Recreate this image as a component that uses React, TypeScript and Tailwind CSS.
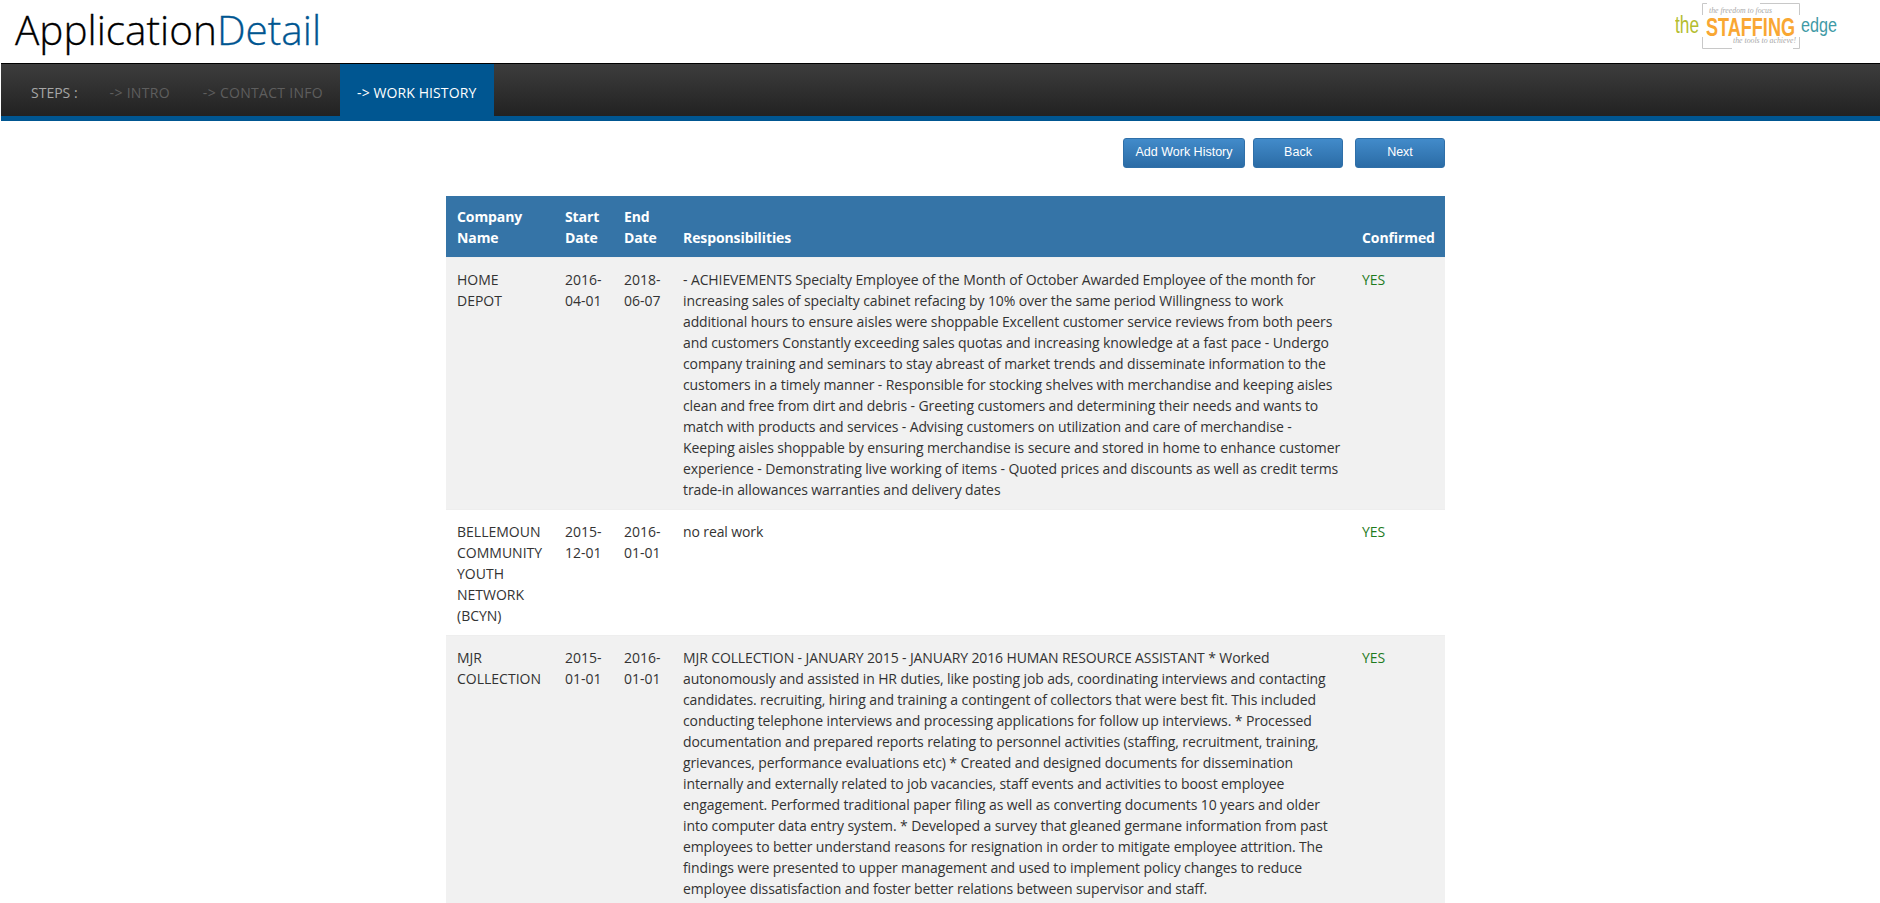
const bodyFont = "font-['Open_Sans','Noto_Sans',sans-serif]";

type WorkRow = {
  company: string[];
  start: string[];
  end: string[];
  lines: string[];
};

const rows: WorkRow[] = [
  {
    company: ["HOME", "DEPOT"],
    start: ["2016-", "04-01"],
    end: ["2018-", "06-07"],
    lines: [
      "- ACHIEVEMENTS Specialty Employee of the Month of October Awarded Employee of the month for",
      "increasing sales of specialty cabinet refacing by 10% over the same period Willingness to work",
      "additional hours to ensure aisles were shoppable Excellent customer service reviews from both peers",
      "and customers Constantly exceeding sales quotas and increasing knowledge at a fast pace - Undergo",
      "company training and seminars to stay abreast of market trends and disseminate information to the",
      "customers in a timely manner - Responsible for stocking shelves with merchandise and keeping aisles",
      "clean and free from dirt and debris - Greeting customers and determining their needs and wants to",
      "match with products and services - Advising customers on utilization and care of merchandise -",
      "Keeping aisles shoppable by ensuring merchandise is secure and stored in home to enhance customer",
      "experience - Demonstrating live working of items - Quoted prices and discounts as well as credit terms",
      "trade-in allowances warranties and delivery dates",
    ],
  },
  {
    company: ["BELLEMOUN", "COMMUNITY", "YOUTH", "NETWORK", "(BCYN)"],
    start: ["2015-", "12-01"],
    end: ["2016-", "01-01"],
    lines: ["no real work"],
  },
  {
    company: ["MJR", "COLLECTION"],
    start: ["2015-", "01-01"],
    end: ["2016-", "01-01"],
    lines: [
      "MJR COLLECTION - JANUARY 2015 - JANUARY 2016 HUMAN RESOURCE ASSISTANT * Worked",
      "autonomously and assisted in HR duties, like posting job ads, coordinating interviews and contacting",
      "candidates. recruiting, hiring and training a contingent of collectors that were best fit. This included",
      "conducting telephone interviews and processing applications for follow up interviews. * Processed",
      "documentation and prepared reports relating to personnel activities (staffing, recruitment, training,",
      "grievances, performance evaluations etc) * Created and designed documents for dissemination",
      "internally and externally related to job vacancies, staff events and activities to boost employee",
      "engagement. Performed traditional paper filing as well as converting documents 10 years and older",
      "into computer data entry system. * Developed a survey that gleaned germane information from past",
      "employees to better understand reasons for resignation in order to mitigate employee attrition. The",
      "findings were presented to upper management and used to implement policy changes to reduce",
      "employee dissatisfaction and foster better relations between supervisor and staff.",
    ],
  },
];

function Lines({ items }: { items: string[] }) {
  return (
    <>
      {items.map((line) => (
        <span key={line} className="block whitespace-nowrap">
          {line}
        </span>
      ))}
    </>
  );
}

function Logo() {
  return (
    <svg viewBox="0 0 164 48" className="h-[48px] w-[164px]">
      {/* frame corners */}
      <path
        d="M27.5 13V1.5H32M85 1.5H124.5V13M27.5 35V46.5H57M118 46.5H124.5V35"
        fill="none"
        stroke="#c8c8c8"
        strokeWidth="1"
      />
      <text x="34" y="11" fontFamily="Liberation Serif, serif" fontStyle="italic" fontSize="7.5" fill="#a9a9a9" textLength="63" lengthAdjust="spacingAndGlyphs">
        the freedom to focus
      </text>
      <text x="58" y="41" fontFamily="Liberation Serif, serif" fontStyle="italic" fontSize="7.5" fill="#a9a9a9" textLength="63" lengthAdjust="spacingAndGlyphs">
        the tools to achieve!
      </text>
      <text x="0" y="31" fontFamily="Liberation Sans, sans-serif" fontSize="23" fill="#b4bd2f" textLength="24" lengthAdjust="spacingAndGlyphs">
        the
      </text>
      <text x="31" y="34" fontFamily="Liberation Sans, sans-serif" fontWeight="700" fontSize="26" fill="#f9a733" textLength="89" lengthAdjust="spacingAndGlyphs">
        STAFFING
      </text>
      <text x="126" y="30" fontFamily="Liberation Sans, sans-serif" fontSize="20" fill="#3f9aa6" textLength="36" lengthAdjust="spacingAndGlyphs">
        edge
      </text>
    </svg>
  );
}

function NavStep({ label, active }: { label: string; active?: boolean }) {
  return (
    <div
      className={
        active
          ? "flex h-[53px] items-center bg-[#005691] px-[17.5px] pt-[4px] text-[14px] tracking-[0.1px] text-white"
          : "flex h-[53px] items-center px-[16.5px] pt-[4px] text-[14px] tracking-[0.3px] text-[#5e5e5e]"
      }
    >
      {label}
    </div>
  );
}

function ActionButton({ label, width }: { label: string; width: string }) {
  return (
    <button
      className={`h-[30px] ${width} rounded-[3px] border border-[#2f6fa8] bg-gradient-to-b from-[#428bca] to-[#2b6ca6] pb-[2px] font-['Liberation_Sans',sans-serif] text-[12.5px] text-white`}
    >
      {label}
    </button>
  );
}

export default function App() {
  return (
    <div className={`h-screen overflow-hidden bg-white ${bodyFont}`}>
      <header className="flex h-[63px] items-start justify-between">
        <h1 className="ml-[15px] mt-[5px] text-[40.5px] font-light leading-[50px] text-black [-webkit-text-stroke:0.3px]">
          Application<span className="text-[#005691]">Detail</span>
        </h1>
        <div className="mr-[41px] mt-[2px]">
          <Logo />
        </div>
      </header>

      <nav className="ml-px flex h-[58px] items-start border-b-[5px] border-t border-b-[#005691] border-t-black bg-gradient-to-b from-[#3d3d3d] to-[#222222]">
        <div className="flex h-[52px] items-center pl-[30px] pr-[15.5px] pt-[4px] text-[14px] text-[#a6a6a6]">STEPS :</div>
        <NavStep label="-> INTRO" />
        <NavStep label="-> CONTACT INFO" />
        <NavStep label="-> WORK HISTORY" active />
      </nav>

      <main className="ml-[446px] w-[999px]">
        <div className="mt-[17px] flex h-[30px] justify-end">
          <ActionButton label="Add Work History" width="w-[122px]" />
          <div className="ml-[8px]">
            <ActionButton label="Back" width="w-[90px]" />
          </div>
          <div className="ml-[12px]">
            <ActionButton label="Next" width="w-[90px]" />
          </div>
        </div>

        <table className="mt-[28px] w-[999px] table-fixed border-collapse text-[14px] leading-[21px] text-[#333333]">
          <colgroup>
            <col className="w-[108px]" />
            <col className="w-[59px]" />
            <col className="w-[59px]" />
            <col className="w-[679px]" />
            <col className="w-[94px]" />
          </colgroup>
          <thead>
            <tr className="bg-[#3574a7] text-left align-bottom font-bold tracking-[-0.1px] text-white">
              <th className="px-[11px] pb-[9px] pt-[10px]">
                <Lines items={["Company", "Name"]} />
              </th>
              <th className="px-[11px] pb-[9px] pt-[10px]">
                <Lines items={["Start", "Date"]} />
              </th>
              <th className="px-[11px] pb-[9px] pt-[10px]">
                <Lines items={["End", "Date"]} />
              </th>
              <th className="px-[11px] pb-[9px] pt-[10px]">Responsibilities</th>
              <th className="px-[11px] pb-[9px] pt-[10px]">Confirmed</th>
            </tr>
          </thead>
          <tbody>
            {rows.map((row, i) => (
              <tr
                key={row.company[0]}
                className={i % 2 === 0 ? "bg-[#f1f1f1] align-top" : "bg-white align-top"}
              >
                <td className="border-t border-[#eeeeee] px-[11px] pb-[9px] pt-[11px]">
                  <Lines items={row.company} />
                </td>
                <td className="border-t border-[#eeeeee] px-[11px] pb-[9px] pt-[11px]">
                  <Lines items={row.start} />
                </td>
                <td className="border-t border-[#eeeeee] px-[11px] pb-[9px] pt-[11px]">
                  <Lines items={row.end} />
                </td>
                <td className="border-t border-[#eeeeee] px-[11px] pb-[9px] pt-[11px] tracking-[-0.11px]">
                  <Lines items={row.lines} />
                </td>
                <td className="border-t border-[#eeeeee] px-[11px] pb-[9px] pt-[11px] text-[#1e7b1e]">YES</td>
              </tr>
            ))}
          </tbody>
        </table>
      </main>
    </div>
  );
}
